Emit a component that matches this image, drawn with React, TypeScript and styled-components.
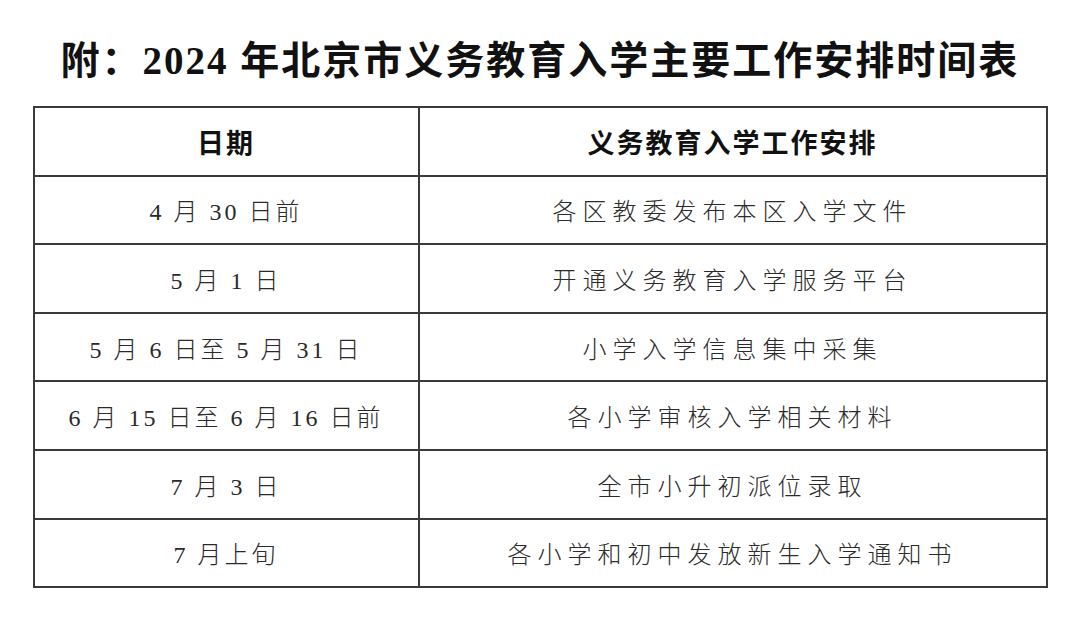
import styled, { createGlobalStyle } from 'styled-components'

const GlobalStyle = createGlobalStyle`
  html, body {
    margin: 0;
    padding: 0;
    background: #ffffff;
  }
  body {
    font-family: 'Liberation Serif', 'Noto Sans CJK SC', serif;
    color: #222;
  }
`

const Page = styled.div`
  width: 1080px;
  height: 633px;
  display: flex;
  flex-direction: column;
  align-items: center;
  padding-top: 33px;
  box-sizing: border-box;
  overflow: hidden;
`

const Title = styled.h1`
  margin: 0 0 17px;
  height: 56px;
  line-height: 56px;
  font-family: 'Liberation Serif', 'Noto Sans CJK SC', serif;
  font-size: 39px;
  font-weight: 700;
  letter-spacing: 2px;
  color: #111;
  white-space: nowrap;
`

const Schedule = styled.table`
  width: 1015px;
  border-collapse: collapse;
  table-layout: fixed;
  border: 2px solid #3a3a3a;
`

const HeadCell = styled.th<{ $wide?: boolean }>`
  width: ${(p) => (p.$wide ? 'auto' : '385px')};
  height: 68.6px;
  box-sizing: border-box;
  padding: 0;
  border: 2px solid #3a3a3a;
  font-family: 'Noto Sans CJK SC', sans-serif;
  font-size: 27px;
  font-weight: 700;
  letter-spacing: 2px;
  color: #111;
  text-align: center;
  vertical-align: middle;
`

const Cell = styled.td<{ $spacing: number }>`
  height: 68.6px;
  box-sizing: border-box;
  padding: 0;
  border: 2px solid #3a3a3a;
  font-family: 'Liberation Serif', 'Noto Sans CJK SC', serif;
  font-size: 24px;
  font-weight: 300;
  letter-spacing: ${(p) => p.$spacing}px;
  color: #2a2a2a;
  text-align: center;
  vertical-align: middle;
  white-space: nowrap;
`

const rows = [
  { date: '4 月 30 日前', task: '各区教委发布本区入学文件' },
  { date: '5 月 1 日', task: '开通义务教育入学服务平台' },
  { date: '5 月 6 日至 5 月 31 日', task: '小学入学信息集中采集' },
  { date: '6 月 15 日至 6 月 16 日前', task: '各小学审核入学相关材料' },
  { date: '7 月 3 日', task: '全市小升初派位录取' },
  { date: '7 月上旬', task: '各小学和初中发放新生入学通知书' },
]

function App() {
  return (
    <>
      <GlobalStyle />
      <Page>
        <Title>附：2024 年北京市义务教育入学主要工作安排时间表</Title>
        <Schedule>
          <thead>
            <tr>
              <HeadCell>日期</HeadCell>
              <HeadCell $wide>义务教育入学工作安排</HeadCell>
            </tr>
          </thead>
          <tbody>
            {rows.map((row) => (
              <tr key={row.date}>
                <Cell $spacing={3}>{row.date}</Cell>
                <Cell $spacing={6}>{row.task}</Cell>
              </tr>
            ))}
          </tbody>
        </Schedule>
      </Page>
    </>
  )
}

export default App
